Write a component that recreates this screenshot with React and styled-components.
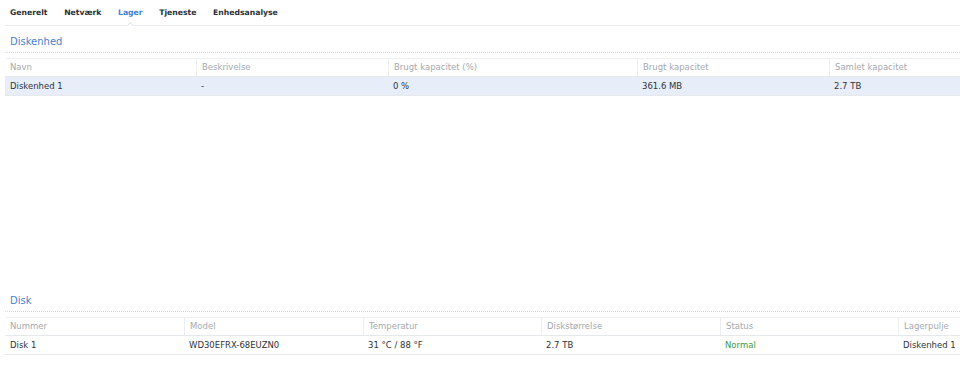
import React from "react";
import styled, { createGlobalStyle } from "styled-components";

const GlobalStyle = createGlobalStyle`
  html, body {
    margin: 0;
    padding: 0;
    background: #ffffff;
  }
  body {
    font-family: "DejaVu Sans", Verdana, sans-serif;
    font-size: 8.5px;
    color: #333333;
  }
`;

const volumeCols = [
  { title: "Navn", width: "191px" },
  { title: "Beskrivelse", width: "192px" },
  { title: "Brugt kapacitet (%)", width: "249px" },
  { title: "Brugt kapacitet", width: "192px" },
  { title: "Samlet kapacitet", width: "1fr" },
];

const volumeRows = [["Diskenhed 1", "-", "0 %", "361.6 MB", "2.7 TB"]];

const diskCols = [
  { title: "Nummer", width: "179px" },
  { title: "Model", width: "179px" },
  { title: "Temperatur", width: "178px" },
  { title: "Diskstørrelse", width: "179px" },
  { title: "Status", width: "178px" },
  { title: "Lagerpulje", width: "1fr" },
];

const diskRows = [
  ["Disk 1", "WD30EFRX-68EUZN0", "31 °C / 88 °F", "2.7 TB", "Normal", "Diskenhed 1"],
];

const tabs = ["Generelt", "Netværk", "Lager", "Tjeneste", "Enhedsanalyse"];

const DataTable = ({ cols, rows, selected }) => {
  const template = cols.map((c) => c.width).join(" ");
  return (
    <Table>
      <HeadRow $cols={template}>
        {cols.map((c) => (
          <HeadCell key={c.title}>{c.title}</HeadCell>
        ))}
      </HeadRow>
      {rows.map((r, i) => (
        <Row key={i} $cols={template} $selected={selected === i}>
          {r.map((v, j) => (
            <Cell key={j} $status={v === "Normal"}>
              {v}
            </Cell>
          ))}
        </Row>
      ))}
    </Table>
  );
};

export default function App() {
  return (
    <>
      <GlobalStyle />
      <Page>
        <TabBar>
          {tabs.map((t) => (
            <Tab key={t} $active={t === "Lager"}>
              {t}
            </Tab>
          ))}
        </TabBar>
        <Section $grow>
          <SectionTitle>Diskenhed</SectionTitle>
          <DataTable cols={volumeCols} rows={volumeRows} selected={0} />
        </Section>
        <Section>
          <SectionTitle>Disk</SectionTitle>
          <DataTable cols={diskCols} rows={diskRows} />
        </Section>
      </Page>
    </>
  );
}

const Page = styled.div`
  box-sizing: border-box;
  width: 960px;
  height: 368px;
  padding: 0 0 13px 5px;
  display: flex;
  flex-direction: column;
  overflow: hidden;
`;

const TabBar = styled.div`
  display: flex;
  align-items: center;
  gap: 16.6px;
  height: 25px;
  padding-left: 5px;
  border-bottom: 1px solid #e9ecef;
  flex-shrink: 0;
`;

const Tab = styled.div`
  position: relative;
  height: 25px;
  line-height: 26px;
  font-size: 7.7px;
  font-weight: bold;
  color: ${({ $active }) => ($active ? "#3d7fd4" : "#2a2f34")};

  &::after {
    display: ${({ $active }) => ($active ? "block" : "none")};
    content: "";
    position: absolute;
    left: 50%;
    bottom: -3px;
    width: 4px;
    height: 4px;
    margin-left: -2px;
    background: #ffffff;
    border-top: 1px solid #e2e6ea;
    border-left: 1px solid #e2e6ea;
    transform: rotate(45deg);
  }
`;

const Section = styled.div`
  display: flex;
  flex-direction: column;
  flex: ${({ $grow }) => ($grow ? "1" : "none")};
`;

const SectionTitle = styled.div`
  height: 14px;
  line-height: 14px;
  padding: 9px 0 3px 5px;
  font-size: 10px;
  color: #4a7fcb;
  border-bottom: 1px dotted #d6d9dc;
  margin-bottom: 5px;
`;

const Table = styled.div`
  display: flex;
  flex-direction: column;
`;

const HeadRow = styled.div`
  box-sizing: border-box;
  display: grid;
  grid-template-columns: ${({ $cols }) => $cols};
  height: 19px;
  border-top: 1px solid #eef0f2;
  border-bottom: 1px solid #e6e9ec;
`;

const HeadCell = styled.div`
  padding: 0 5px;
  line-height: 17px;
  color: #a4a9ae;
  white-space: nowrap;
  overflow: hidden;

  & + & {
    border-left: 1px solid #eceef0;
  }
`;

const Row = styled.div`
  box-sizing: border-box;
  display: grid;
  grid-template-columns: ${({ $cols }) => $cols};
  height: 19px;
  background: ${({ $selected }) => ($selected ? "#e7eefa" : "#ffffff")};
  border-bottom: 1px solid #e6e9ec;
`;

const Cell = styled.div`
  padding: 0 5px;
  line-height: 18px;
  white-space: nowrap;
  color: ${({ $status }) => ($status ? "#3d9a3d" : "#2f3337")};
`;
